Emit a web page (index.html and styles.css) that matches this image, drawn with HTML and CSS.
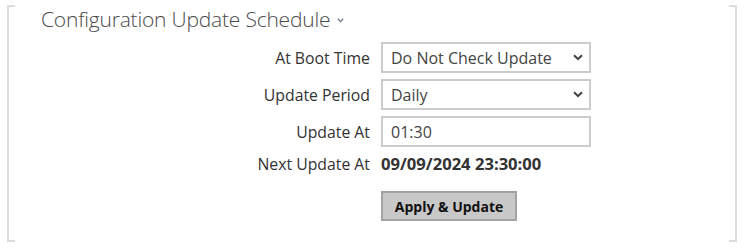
FILE: index.html
```html
<!DOCTYPE html>
<html lang="en">
<head>
    <meta charset="UTF-8">
    <meta name="viewport" content="width=device-width, initial-scale=1.0">
    <title>Configuration Update Schedule</title>
    <link rel="stylesheet" href="styles.css">
</head>
<body>
    <div class="panel">
        <h2 class="panel-title">
            Configuration Update Schedule
            <svg class="title-chevron" width="7" height="5" viewBox="0 0 7 5"><path d="M0.8 0.8 L3.5 3.6 L6.2 0.8" fill="none" stroke="#6a7480" stroke-width="1.3"/></svg>
        </h2>
        <form class="schedule-form">
            <label for="bootTime">At Boot Time</label>
            <div class="select-wrap">
                <select id="bootTime">
                    <option>Do Not Check Update</option>
                    <option>Check Update</option>
                </select>
                <svg class="select-arrow" width="10" height="7" viewBox="0 0 10 7"><path d="M1 1.2 L5 5 L9 1.2" fill="none" stroke="#444" stroke-width="2"/></svg>
            </div>

            <label for="period">Update Period</label>
            <div class="select-wrap">
                <select id="period">
                    <option>Daily</option>
                    <option>Weekly</option>
                    <option>Monthly</option>
                </select>
                <svg class="select-arrow" width="10" height="7" viewBox="0 0 10 7"><path d="M1 1.2 L5 5 L9 1.2" fill="none" stroke="#444" stroke-width="2"/></svg>
            </div>

            <label for="updateAt">Update At</label>
            <input type="text" id="updateAt" value="01:30">

            <span class="label">Next Update At</span>
            <span class="value">09/09/2024 23:30:00</span>

            <span></span>
            <button type="button">Apply &amp; Update</button>
        </form>
    </div>
</body>
</html>
```

FILE: styles.css
```css
body {
    margin: 0;
    padding-top: 11px;
    font-family: "Open Sans", "Noto Sans", sans-serif;
    color: #333;
    background: #fff;
}
.panel {
    margin: 0 15px 0 7px;
    padding-bottom: 21px;
    border-left: 2px solid #ddd;
    border-right: 2px solid #ddd;
    background:
        linear-gradient(#ddd, #ddd) top left / 6px 2px no-repeat,
        linear-gradient(#ddd, #ddd) top right / 6px 2px no-repeat,
        linear-gradient(#ddd, #ddd) bottom left / 6px 2px no-repeat,
        linear-gradient(#ddd, #ddd) bottom right / 6px 2px no-repeat;
}
.panel-title {
    margin: -6px 0 0;
    padding-left: 32px;
    font-size: 21px;
    font-weight: 300;
    letter-spacing: -0.2px;
    line-height: 28px;
    color: #4a4a4a;
    display: flex;
    align-items: center;
    gap: 7px;
}
.title-chevron {
    margin-top: 2px;
}
.schedule-form {
    margin-top: 9px;
    display: grid;
    grid-template-columns: 361px 210px;
    column-gap: 11px;
    row-gap: 6px;
    align-items: center;
    font-size: 15.8px;
}
label, .label {
    text-align: right;
    color: #333;
}
.select-wrap {
    position: relative;
}
select, input {
    box-sizing: border-box;
    width: 210px;
    height: 31px;
    margin: 0;
    padding: 0 8px;
    border: 2px solid #ccc;
    border-radius: 0;
    background: #fff;
    font-family: inherit;
    font-size: 16px;
    color: #444;
    appearance: none;
    -webkit-appearance: none;
    outline: none;
}
.select-arrow {
    position: absolute;
    right: 8px;
    top: 12px;
    pointer-events: none;
}
.value {
    font-size: 16.6px;
    font-weight: 700;
    color: #333;
    line-height: 20px;
}
button {
    justify-self: start;
    margin-top: 10px;
    width: 136px;
    height: 30px;
    border: 2px solid #a3a3a3;
    background: #c8c8c8;
    font-family: inherit;
    font-size: 14px;
    font-weight: 700;
    color: #111;
    cursor: pointer;
}
button:hover {
    background: #d4d4d4;
}
```
